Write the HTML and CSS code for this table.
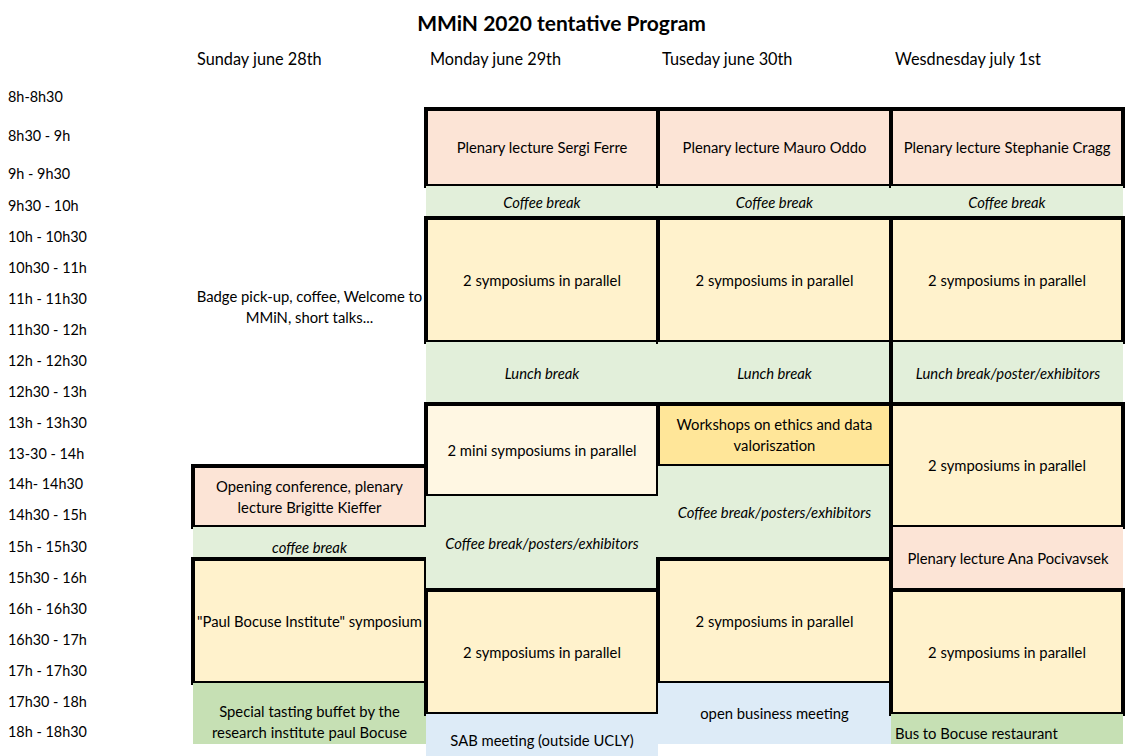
FILE: index.html
```html
<!doctype html>
<html lang="en">
<head>
    <meta charset="UTF-8">
    <meta name="viewport" content="width=device-width, initial-scale=1.0">
    <title>MMiN 2020 tentative Program</title>
    <link rel="stylesheet" href="styles.css">
</head>
<body>
<main class="sheet">
    <h1 class="title">MMiN 2020 tentative Program</h1>

    <div class="day c2">Sunday june 28th</div>
    <div class="day c3">Monday june 29th</div>
    <div class="day c4">Tuseday june 30th</div>
    <div class="day c5">Wesdnesday july 1st</div>

    <!-- time column -->
    <div class="time r3">8h-8h30</div>
    <div class="time r4">8h30 - 9h</div>
    <div class="time r5">9h - 9h30</div>
    <div class="time r6">9h30 - 10h</div>
    <div class="time r7">10h - 10h30</div>
    <div class="time r8">10h30 - 11h</div>
    <div class="time r9">11h - 11h30</div>
    <div class="time r10">11h30 - 12h</div>
    <div class="time r11">12h - 12h30</div>
    <div class="time r12">12h30 - 13h</div>
    <div class="time r13">13h - 13h30</div>
    <div class="time r14">13-30 - 14h</div>
    <div class="time r15">14h- 14h30</div>
    <div class="time r16">14h30 - 15h</div>
    <div class="time r17">15h - 15h30</div>
    <div class="time r18">15h30 - 16h</div>
    <div class="time r19">16h - 16h30</div>
    <div class="time r20">16h30 - 17h</div>
    <div class="time r21">17h - 17h30</div>
    <div class="time r22">17h30 - 18h</div>
    <div class="time r23">18h - 18h30</div>

    <!-- sunday -->
    <div class="cell c2 r7 s6 welcome">Badge pick-up, coffee, Welcome to<br>MMiN, short talks...</div>
    <div class="cell c2 r15 s2 plenary boxed">Opening conference, plenary<br>lecture Brigitte Kieffer</div>
    <div class="cell c2 r17 break bottom">coffee break</div>
    <div class="cell c2 r18 s4 symposium boxed">"Paul Bocuse Institute" symposium</div>
    <div class="cell c2 r22 s2 dinner bottom">Special tasting buffet by the<br>research institute paul Bocuse</div>

    <!-- monday -->
    <div class="cell c3 r4 s2 plenary boxed">Plenary lecture Sergi Ferre</div>
    <div class="cell c3 r6 break">Coffee break</div>
    <div class="cell c3 r7 s4 symposium boxed">2 symposiums in parallel</div>
    <div class="cell c3 r11 s2 break">Lunch break</div>
    <div class="cell c3 r13 s3 mini boxed">2 mini symposiums in parallel</div>
    <div class="cell c3 r16 s3 break">Coffee break/posters/exhibitors</div>
    <div class="cell c3 r19 s4 symposium boxed">2 symposiums in parallel</div>
    <div class="cell c3 r23 s2 meeting sab">SAB meeting (outside UCLY)</div>

    <!-- tuesday -->
    <div class="cell c4 r4 s2 plenary boxed">Plenary lecture Mauro Oddo</div>
    <div class="cell c4 r6 break">Coffee break</div>
    <div class="cell c4 r7 s4 symposium boxed">2 symposiums in parallel</div>
    <div class="cell c4 r11 s2 break">Lunch break</div>
    <div class="cell c4 r13 s2 workshop boxed">Workshops on ethics and data<br>valoriszation</div>
    <div class="cell c4 r15 s3 break">Coffee break/posters/exhibitors</div>
    <div class="cell c4 r18 s4 symposium boxed">2 symposiums in parallel</div>
    <div class="cell c4 r22 s2 meeting">open business meeting</div>

    <!-- wednesday -->
    <div class="cell c5 r4 s2 plenary boxed">Plenary lecture Stephanie Cragg</div>
    <div class="cell c5 r6 break">Coffee break</div>
    <div class="cell c5 r7 s4 symposium boxed">2 symposiums in parallel</div>
    <div class="cell c5 r11 s2 break left-line">Lunch break/poster/exhibitors</div>
    <div class="cell c5 r13 s4 symposium boxed">2 symposiums in parallel</div>
    <div class="cell c5 r17 s2 plenary left-line">Plenary lecture Ana Pocivavsek</div>
    <div class="cell c5 r19 s4 symposium boxed">2 symposiums in parallel</div>
    <div class="cell c5 r23 dinner bottom start">Bus to Bocuse restaurant</div>
</main>
</body>
</html>
```

FILE: styles.css
```css
body {
    margin: 0;
    background: #fff;
    color: #000;
    font-family: Lato, "Liberation Sans", sans-serif;
}

.sheet {
    display: grid;
    grid-template-columns: 193px 233px 232px 233px 232px;
    grid-template-rows:
        42px 36px 31px 39px 38px 32px
        31px 31px 31px 31px 31px 31px
        31px 31px 30px 31px 32px 31px
        31px 31px 31px 31px 30px 12px;
}

.title {
    grid-column: 1 / -1;
    grid-row: 1;
    margin: 0;
    padding-top: 4px;
    align-self: center;
    text-align: center;
    font-size: 21px;
    line-height: 26px;
    font-weight: bold;
}

.day {
    grid-row: 2;
    align-self: end;
    padding: 0 0 8px 4px;
    font-size: 16.3px;
    line-height: 22px;
}

.time {
    grid-column: 1;
    align-self: end;
    padding: 0 0 3px 8px;
    font-size: 14.4px;
    line-height: 18px;
}

.cell {
    display: flex;
    align-items: center;
    justify-content: center;
    text-align: center;
    font-size: 14.8px;
    line-height: 21px;
    white-space: nowrap;

    &.bottom {
        align-items: flex-end;
        padding-bottom: 1px;
    }

    &.start {
        justify-content: flex-start;
        padding-left: 4px;
        padding-bottom: 0;
    }

    /* thick border, centred on the cell edge like the sheet's gridlines */
    &.boxed {
        outline: 4px solid #000;
        outline-offset: -2px;
    }

    &.left-line {
        margin-left: -2px;
        border-left: 4px solid #000;
    }
}

.welcome {
    padding-bottom: 8px;
}

.plenary { background: #fce4d6; }
.break { background: #e2efda; font-style: italic; }
.symposium { background: #fff2cc; }
.mini { background: #fff7e3; }
.workshop { background: #ffe699; }
.dinner { background: #c6e0b4; }
.meeting { background: #ddebf7; }

.sab {
    padding-top: 10px;
}

/* columns */
.c2 { grid-column: 2; }
.c3 { grid-column: 3; }
.c4 { grid-column: 4; }
.c5 { grid-column: 5; }

/* rows: 3 = 8h, then one per half hour */
.r3 { grid-row-start: 3; }
.r4 { grid-row-start: 4; }
.r5 { grid-row-start: 5; }
.r6 { grid-row-start: 6; }
.r7 { grid-row-start: 7; }
.r8 { grid-row-start: 8; }
.r9 { grid-row-start: 9; }
.r10 { grid-row-start: 10; }
.r11 { grid-row-start: 11; }
.r12 { grid-row-start: 12; }
.r13 { grid-row-start: 13; }
.r14 { grid-row-start: 14; }
.r15 { grid-row-start: 15; }
.r16 { grid-row-start: 16; }
.r17 { grid-row-start: 17; }
.r18 { grid-row-start: 18; }
.r19 { grid-row-start: 19; }
.r20 { grid-row-start: 20; }
.r21 { grid-row-start: 21; }
.r22 { grid-row-start: 22; }
.r23 { grid-row-start: 23; }

.s2 { grid-row-end: span 2; }
.s3 { grid-row-end: span 3; }
.s4 { grid-row-end: span 4; }
.s6 { grid-row-end: span 6; }
```
